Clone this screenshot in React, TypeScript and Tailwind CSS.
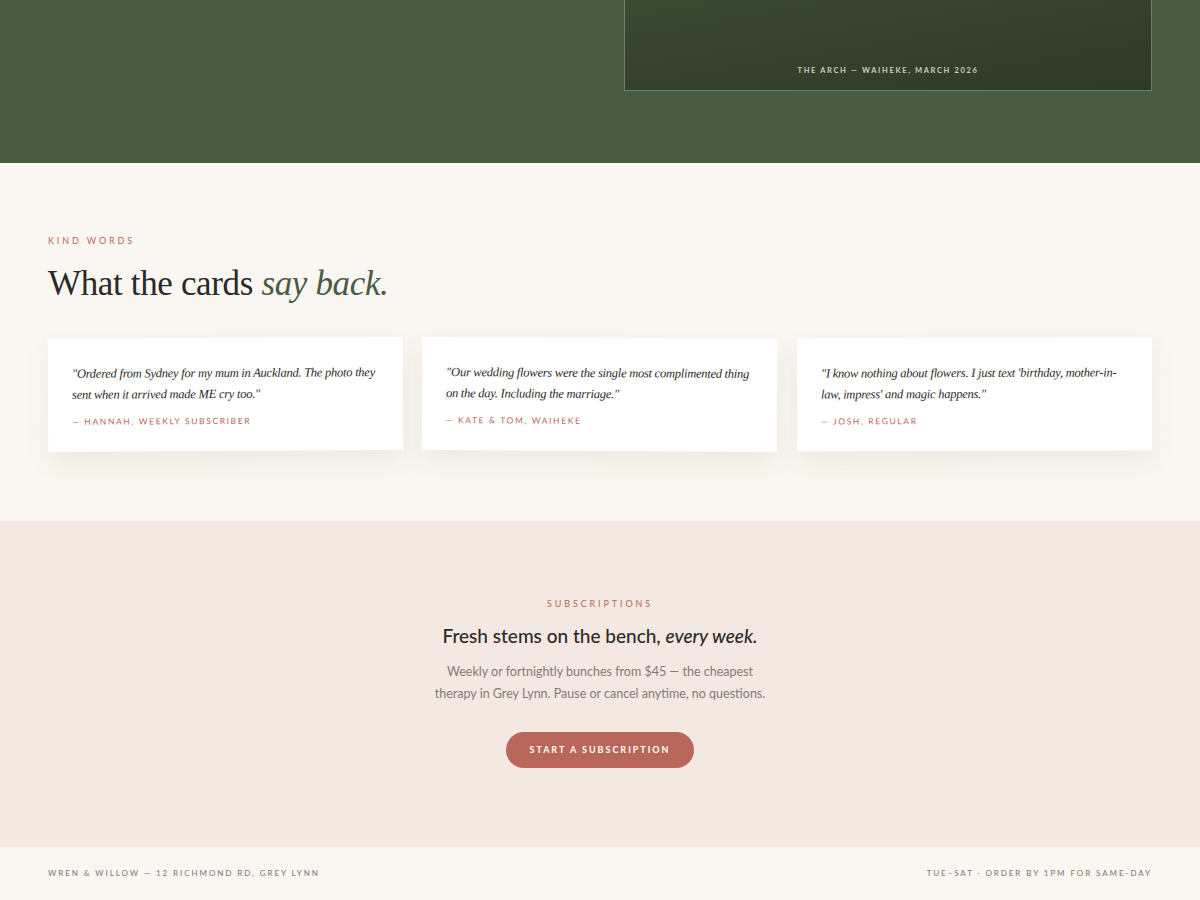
import React from 'react';

const SERIF = 'font-["Liberation_Serif","Times_New_Roman",serif]';
const SANS = 'font-["Lato","Open_Sans",sans-serif]';

const quotes = [
  {
    text: '"Ordered from Sydney for my mum in Auckland. The photo they sent when it arrived made ME cry too."',
    who: '— Hannah, weekly subscriber',
    tilt: '-rotate-[0.3deg]',
  },
  {
    text: '"Our wedding flowers were the single most complimented thing on the day. Including the marriage."',
    who: '— Kate & Tom, Waiheke',
    tilt: 'rotate-[0.35deg]',
  },
  {
    text: '"I know nothing about flowers. I just text \'birthday, mother-in-law, impress\' and magic happens."',
    who: '— Josh, regular',
    tilt: '-rotate-[0.2deg]',
  },
];

function Hero() {
  return (
    <section className="bg-[#4b5a42] h-[163px] px-12">
      <div className="grid grid-cols-2 gap-[48px] max-w-[1104px] mx-auto">
        <div />
        <div className="h-[91px] border-x border-b border-[#6f7f64] bg-gradient-to-br from-[#3c4933] to-[#2e3927] flex items-end justify-center pb-[14px]">
          <span className={`${SANS} text-[7.5px] font-bold uppercase tracking-[0.22em] text-[#c9cfbd]`}>
            The Arch — Waiheke, March 2026
          </span>
        </div>
      </div>
    </section>
  );
}

function KindWords() {
  return (
    <section className="bg-[#faf7f2] px-12 pt-[71px] pb-[70px]">
      <div className="max-w-[1104px] mx-auto">
        <p className={`${SANS} text-[9px] uppercase tracking-[0.32em] text-[#b8675a]`}>Kind words</p>
        <h2 className={`${SERIF} mt-[18px] text-[35px] tracking-[-0.01em] leading-none text-[#2b2a27]`}>
          What the cards <em className="text-[#4b5a42]">say back.</em>
        </h2>
        <div className="mt-[37px] grid grid-cols-3 gap-[19px]">
          {quotes.map(q => (
            <figure
              key={q.who}
              className={`${q.tilt} bg-white pl-6 pr-[20px] pt-[25px] pb-[24px] shadow-[0_10px_24px_rgba(80,60,40,0.08)]`}
            >
              <blockquote className={`${SERIF} italic text-[12.5px] tracking-[-0.02em] leading-[21px] text-[#2b2a27]`}>
                {q.text}
              </blockquote>
              <figcaption className={`${SANS} mt-[10px] text-[8.5px] leading-[12px] uppercase tracking-[0.19em] text-[#b8675a]`}>
                {q.who}
              </figcaption>
            </figure>
          ))}
        </div>
      </div>
    </section>
  );
}

function Subscriptions() {
  return (
    <section className="bg-[#f4e8e3] pt-[77px] pb-[78px] text-center">
      <p className={`${SANS} text-[9px] leading-[12px] uppercase tracking-[0.32em] text-[#b8675a]`}>Subscriptions</p>
      <h3 className={`${SANS} mt-[14px] text-[19px] leading-[24px] font-medium text-[#2b2a27]`}>
        Fresh stems on the bench, <em>every week.</em>
      </h3>
      <p className={`${SANS} mt-[13px] text-[12.5px] leading-[22px] text-[#857a73] max-w-[380px] mx-auto`}>
        Weekly or fortnightly bunches from $45 — the cheapest<br />
        therapy in Grey Lynn. Pause or cancel anytime, no questions.
      </p>
      <button
        className={`${SANS} mt-[27px] h-[36px] w-[188px] rounded-full bg-[#b9675a] text-[9px] font-bold uppercase tracking-[0.22em] text-white`}
      >
        Start a subscription
      </button>
    </section>
  );
}

function Footer() {
  return (
    <footer className={`${SANS} bg-[#faf7f2] border-t border-[#efe6df] px-12 h-[53px] flex items-center justify-between text-[8px] font-medium uppercase tracking-[0.24em] text-[#837e78]`}>
      <span>Wren &amp; Willow — 12 Richmond Rd, Grey Lynn</span>
      <span>Tue–Sat · Order by 1pm for same-day</span>
    </footer>
  );
}

export default function App() {
  return (
    <div className="w-[1200px] min-h-[900px] bg-[#faf7f2]">
      <Hero />
      <KindWords />
      <Subscriptions />
      <Footer />
    </div>
  );
}
